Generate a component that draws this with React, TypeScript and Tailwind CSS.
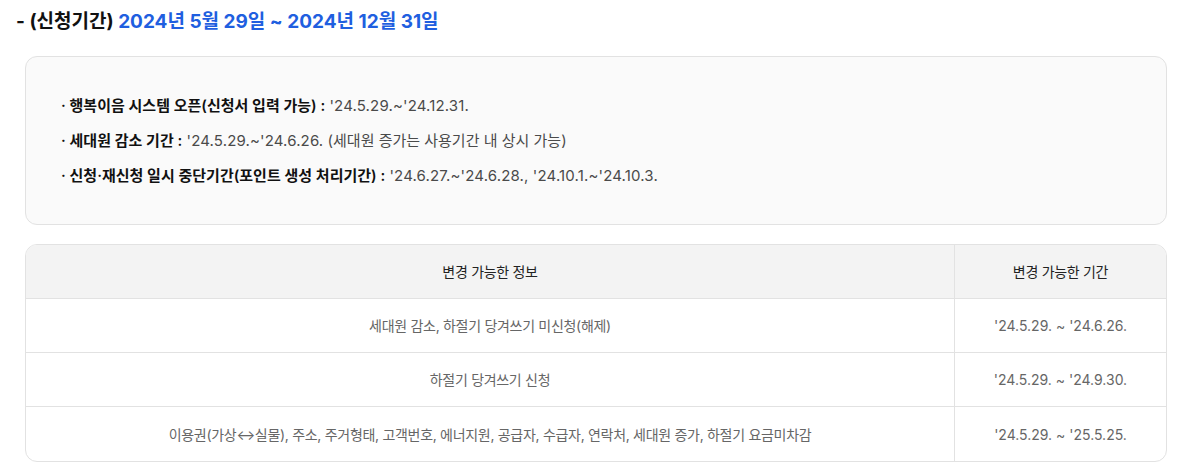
import React from "react";

const font = { fontFamily: "Inter, 'Noto Sans CJK KR', sans-serif" };

function D({ children }: { children: React.ReactNode }) {
  return <span className="tracking-[0.15px]">{children}</span>;
}

export default function App() {
  const rows = [
    ["세대원 감소, 하절기 당겨쓰기 미신청(해제)", "'24.5.29. ~ '24.6.26."],
    ["하절기 당겨쓰기 신청", "'24.5.29. ~ '24.9.30."],
    ["이용권(가상↔실물), 주소, 주거형태, 고객번호, 에너지원, 공급자, 수급자, 연락처, 세대원 증가, 하절기 요금미차감", "'24.5.29. ~ '25.5.25."],
  ];
  return (
    <div className="bg-white w-[1187px] h-[471px] overflow-hidden" style={font}>
      <div className="pl-[16px] pt-[7px] text-[19px] font-bold leading-[29px] text-[#111]">
        - (신청기간) <span className="text-[#1f5fe0]">2024년 5월 29일 ~ 2024년 12월 31일</span>
      </div>
      <div className="ml-[25px] mr-[20px] mt-[20px] h-[169px] rounded-[12px] border border-[#e2e2e2] bg-[#fafafa] pl-[35px] pt-[31px] text-[15px] text-[#4a4a4a]">
        <p className="leading-[35px]"><b className="font-semibold text-[#111]">· 행복이음 시스템 오픈(신청서 입력 가능) :</b> <D>'24.5.29.~'24.12.31.</D></p>
        <p className="leading-[35px]"><b className="font-semibold text-[#111]">· 세대원 감소 기간 :</b> <D>'24.5.29.~'24.6.26.</D> (세대원 증가는 사용기간 내 상시 가능)</p>
        <p className="leading-[35px]"><b className="font-semibold text-[#111]">· 신청·재신청 일시 중단기간(포인트 생성 처리기간) :</b> <D>'24.6.27.~'24.6.28., '24.10.1.~'24.10.3.</D></p>
      </div>
      <div className="ml-[25px] mr-[20px] mt-[19px] rounded-[12px] border border-[#e2e2e2] overflow-hidden text-[14px]">
        <div className="flex h-[54px] bg-[#f3f3f3] border-b border-[#e2e2e2] text-[#222] tracking-[-0.3px]">
          <div className="w-[929px] flex items-center justify-center border-r border-[#e2e2e2]">변경 가능한 정보</div>
          <div className="flex-1 flex items-center justify-center">변경 가능한 기간</div>
        </div>
        {rows.map((r, i) => (
          <div key={i} className={`flex h-[54px] text-[#666] ${i < rows.length - 1 ? "border-b border-[#e2e2e2]" : ""}`}>
            <div className="w-[929px] flex items-center justify-center border-r border-[#e2e2e2] tracking-[-0.3px]">{r[0]}</div>
            <div className="flex-1 flex items-center justify-center">{r[1]}</div>
          </div>
        ))}
      </div>
    </div>
  );
}
